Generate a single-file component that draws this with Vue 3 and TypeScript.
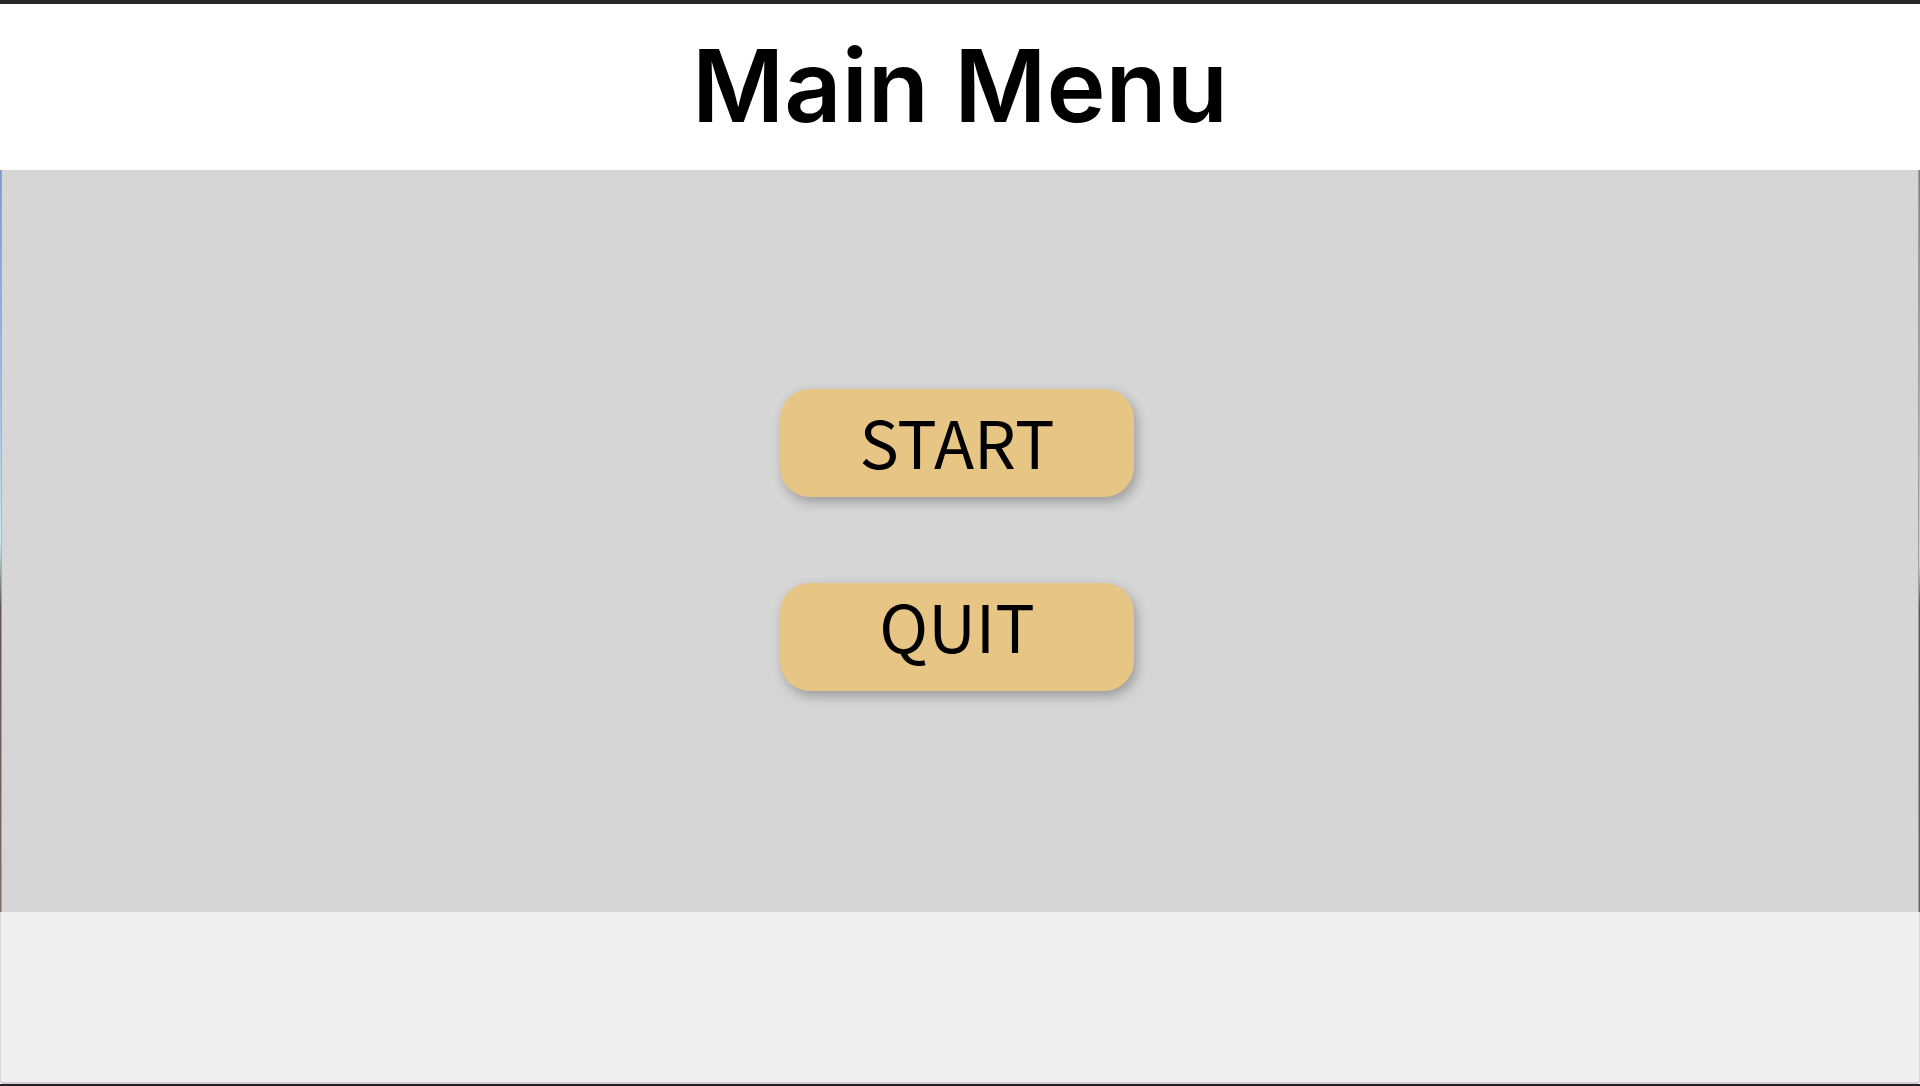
<script setup lang="ts">
import { ref } from 'vue'

interface MenuItem {
  id: string
  label: string
}

const title = 'Main Menu'
const items: MenuItem[] = [
  { id: 'start', label: 'START' },
  { id: 'quit', label: 'QUIT' },
]
const selected = ref('')
</script>

<template>
  <div class="screen">
    <header class="title-bar">
      <h1>{{ title }}</h1>
    </header>
    <main class="stage">
      <nav class="menu" aria-label="Main menu">
        <button
          v-for="item in items"
          :key="item.id"
          type="button"
          :class="['menu-button', item.id]"
          @click="selected = item.id"
        >
          {{ item.label }}
        </button>
      </nav>
    </main>
    <footer class="base"></footer>
  </div>
</template>

<style>
body {
  margin: 0;
}
</style>

<style scoped>
.screen {
  box-sizing: border-box;
  display: flex;
  flex-direction: column;
  min-height: 100vh;
  border-top: 4px solid #272727;
  border-bottom: 2px solid #231f22;
  background: #fff;
}

.title-bar {
  padding: 22px 0 24px;
  text-align: center;
}

h1 {
  margin: 0;
  font: 600 100px/120px Inter, sans-serif;
  color: #000;
}

.stage {
  flex: 1;
  display: flex;
  justify-content: center;
  padding: 219px 6px 0 0;
  background:
    linear-gradient(#7f98c8, #a0bde6 31%, #cdebee 50%, #5a5350 59%, #7a706a) left / 1px 100% no-repeat,
    linear-gradient(#a0a4aa, #b4b8bc 50%, #a09c9a 59%, #a8a4a2) 1px 0 / 1px 100% no-repeat,
    linear-gradient(#6c84ac, #9fb0bd 31%, #d0d8d8 53%, #555 59%, #666) right / 1px 100% no-repeat,
    linear-gradient(90deg, #d6d6d6 calc(100% - 2px), #a09e9c calc(100% - 2px));
}

.menu {
  display: flex;
  flex-direction: column;
  gap: 86px;
}

.menu-button {
  box-sizing: border-box;
  width: 354px;
  height: 108px;
  padding: 0 0 6px;
  border: 0;
  border-radius: 30px;
  background: #e7c585;
  box-shadow: 3px 5px 12px rgba(0, 0, 0, 0.28);
  color: #000;
  font: 400 66px/72px "Noto Sans CJK SC", sans-serif;
  cursor: pointer;
}

.quit {
  padding-bottom: 26px;
}

.base {
  box-sizing: border-box;
  height: 172px;
  border: 1px solid #d8d8d8;
  border-top: 0;
  border-bottom: 2px solid #cfcfcf;
  border-radius: 0 0 4px 4px;
  background: #efefef;
}
</style>
